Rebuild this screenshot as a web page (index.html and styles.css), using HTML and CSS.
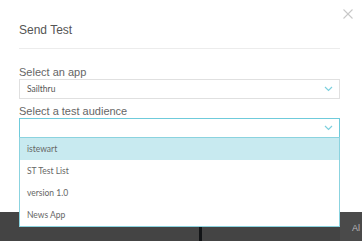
FILE: index.html
```html
<!DOCTYPE html>
<html lang="en">
<head>
    <meta charset="UTF-8">
    <title>Send Test</title>
    <link rel="stylesheet" href="styles.css">
</head>
<body>
    <div class="modal">
        <button class="close" aria-label="Close">
            <svg width="10" height="10" viewBox="0 0 10 10" fill="none" stroke="#c8c8c8" stroke-width="1.1">
                <line x1="0.5" y1="0.5" x2="9.5" y2="9.5"></line>
                <line x1="9.5" y1="0.5" x2="0.5" y2="9.5"></line>
            </svg>
        </button>
        <h2>Send Test</h2>

        <div class="form-group">
            <label>Select an app</label>
            <div class="select">
                <span>Sailthru</span>
                <svg class="chevron" width="9" height="6" viewBox="0 0 9 6" fill="none" stroke="#7dd0de" stroke-width="1.2">
                    <polyline points="1 1 4.5 4.5 8 1"></polyline>
                </svg>
            </div>
        </div>

        <div class="form-group">
            <label>Select a test audience</label>
            <div class="select open">
                <span></span>
                <svg class="chevron" width="9" height="6" viewBox="0 0 9 6" fill="none" stroke="#7dd0de" stroke-width="1.2">
                    <polyline points="1 1 4.5 4.5 8 1"></polyline>
                </svg>
                <ul class="menu">
                    <li class="active">istewart</li>
                    <li>ST Test List</li>
                    <li>version 1.0</li>
                    <li>News App</li>
                </ul>
            </div>
        </div>
    </div>

    <div class="backdrop">
        <div class="divider"></div>
        <div class="side">Al</div>
    </div>
</body>
</html>
```

FILE: styles.css
```css
body {
    margin: 0;
    font-family: "Liberation Sans", Arial, sans-serif;
    background: #444;
    height: 241px;
    overflow: hidden;
}

.modal {
    position: relative;
    background: #fff;
    height: 212px;
    padding: 0 22px 0 19px;
    box-sizing: border-box;
}

.close {
    position: absolute;
    top: 9px;
    right: 9px;
    padding: 0;
    border: none;
    background: none;
    line-height: 0;
}

h2 {
    margin: 0;
    padding: 23px 0 11px;
    font-size: 12px;
    line-height: 14px;
    font-weight: normal;
    color: #555;
    border-bottom: 1px solid #ececec;
}

.form-group {
    margin-top: 17px;
}

.form-group + .form-group {
    margin-top: 6px;
}

label {
    display: block;
    font-size: 11px;
    line-height: 13px;
    color: #666;
}

.select {
    position: relative;
    display: flex;
    align-items: center;
    justify-content: space-between;
    height: 18px;
    padding: 0 6px 0 7px;
    border: 1px solid #e0e0e0;
    font-family: Lato, "Open Sans", sans-serif;
    font-size: 8.5px;
    color: #555;
}

.select.open {
    border-color: #6fcbdb;
}

.menu {
    position: absolute;
    left: -1px;
    right: -1px;
    top: 18px;
    margin: 0;
    padding: 0;
    list-style: none;
    background: #fff;
    border: 1px solid #8bd3df;
    z-index: 2;
}

.menu li {
    height: 22px;
    line-height: 22px;
    padding: 0 7px;
    font-size: 8.5px;
    color: #666;
}

.menu li.active {
    background: #c8eaf0;
}

.backdrop {
    display: flex;
    height: 29px;
}

.divider {
    width: 3px;
    margin-left: 199px;
    background: #121416;
}

.side {
    margin-left: auto;
    width: 22px;
    box-sizing: border-box;
    background: #4a4a4a;
    color: #bbb;
    font-size: 9px;
    padding: 11px 0 0 12px;
    overflow: hidden;
    white-space: nowrap;
}
```
